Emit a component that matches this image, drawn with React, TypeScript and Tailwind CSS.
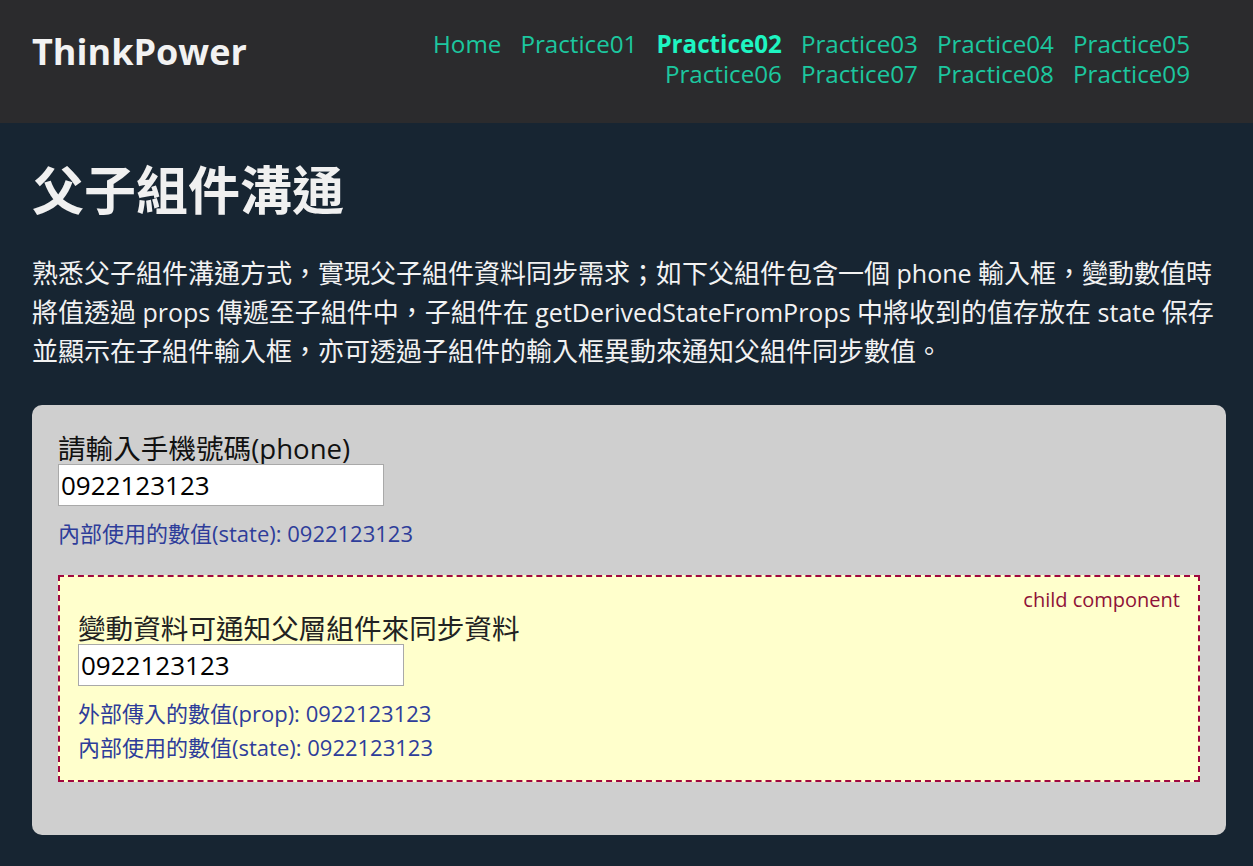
import React, { useState } from "react"

const links = [
    "Home", "Practice01", "Practice02", "Practice03", "Practice04", "Practice05",
    "Practice06", "Practice07", "Practice08", "Practice09",
]

const font = "font-['Open_Sans','Noto_Sans_CJK_TC',sans-serif]"

const Child = ({ value, onChange }: { value: string; onChange: (v: string) => void }) => {
    return (
        <div className="border-2 border-dashed border-[#a0073f] bg-[#ffffcc] pl-[18px] pr-[18px] pt-[10px] pb-[16px]">
            <div className="text-right text-[20px] leading-[26px] text-[#8f1238]">child component</div>
            <label className="block text-[27.6px] leading-[31px] text-[#222]">變動資料可通知父層組件來同步資料</label>
            <input
                className="w-[326px] h-[42px] border border-[#a9a9a9] bg-white px-[2px] text-[26px] text-black outline-none"
                value={value}
                onChange={(e) => onChange(e.target.value)}
            />
            <div className="mt-[10px] text-[22px] leading-[34px] text-[#2e3d9a]">外部傳入的數值(prop): {value}</div>
            <div className="text-[22px] leading-[34px] text-[#2e3d9a]">內部使用的數值(state): {value}</div>
        </div>
    )
}

export default function App() {
    const [phone, setPhone] = useState("0922123123")

    return (
        <div className={`min-h-[866px] bg-[#172532] ${font}`}>
            <header className="flex h-[123px] items-start justify-between bg-[#2b2b2d] pl-[32px] pr-[63px] pt-[27px]">
                <h1 className="text-[36px] font-bold leading-[50px] text-[#f2f2f2]">ThinkPower</h1>
                <nav className="flex w-[790px] flex-wrap justify-end gap-x-[19px] pt-[2px]">
                    {links.map((l) => (
                        <a
                            key={l}
                            className={
                                l === "Practice02"
                                    ? "text-[24.2px] leading-[30px] font-bold text-[#1ef5c2]"
                                    : "text-[24.2px] leading-[30px] text-[#1cc79f]"
                            }
                        >
                            {l}
                        </a>
                    ))}
                </nav>
            </header>

            <main className="pl-[32px] pr-[27px] pb-[31px] pt-[37px]">
                <h2 className="text-[52px] font-bold leading-[60px] text-[#f0f0f0]">父子組件溝通</h2>
                <p className="mt-[34px] text-[26px] leading-[39px] text-[#f2f2f2]">
                    <span className="block whitespace-nowrap">
                        熟悉父子組件溝通方式，實現父子組件資料同步需求；如下父組件包含一個<span className="text-[25px]"> phone </span>輸入框，變動數值時
                    </span>
                    <span className="block whitespace-nowrap">
                        將值透過<span className="text-[25px]"> props </span>傳遞至子組件中，子組件在<span className="text-[25px]"> getDerivedStateFromProps </span>中將收到的值存放在<span className="text-[25px]"> state </span>保存
                    </span>
                    <span className="block whitespace-nowrap">並顯示在子組件輸入框，亦可透過子組件的輸入框異動來通知父組件同步數值。</span>
                </p>

                <div className="mt-[34px] rounded-[10px] bg-[#cfcfcf] px-[26px] pb-[53px] pt-[28px]">
                    <label className="block text-[27.6px] leading-[31px] text-[#111]">請輸入手機號碼(phone)</label>
                    <input
                        className="w-[326px] h-[42px] border border-[#a9a9a9] bg-white px-[2px] text-[26px] text-black outline-none"
                        value={phone}
                        onChange={(e) => setPhone(e.target.value)}
                    />
                    <div className="mt-[12px] text-[22px] leading-[30px] text-[#2e3d9a]">內部使用的數值(state): {phone}</div>
                    <div className="mt-[27px]">
                        <Child value={phone} onChange={setPhone} />
                    </div>
                </div>
            </main>
        </div>
    )
}
